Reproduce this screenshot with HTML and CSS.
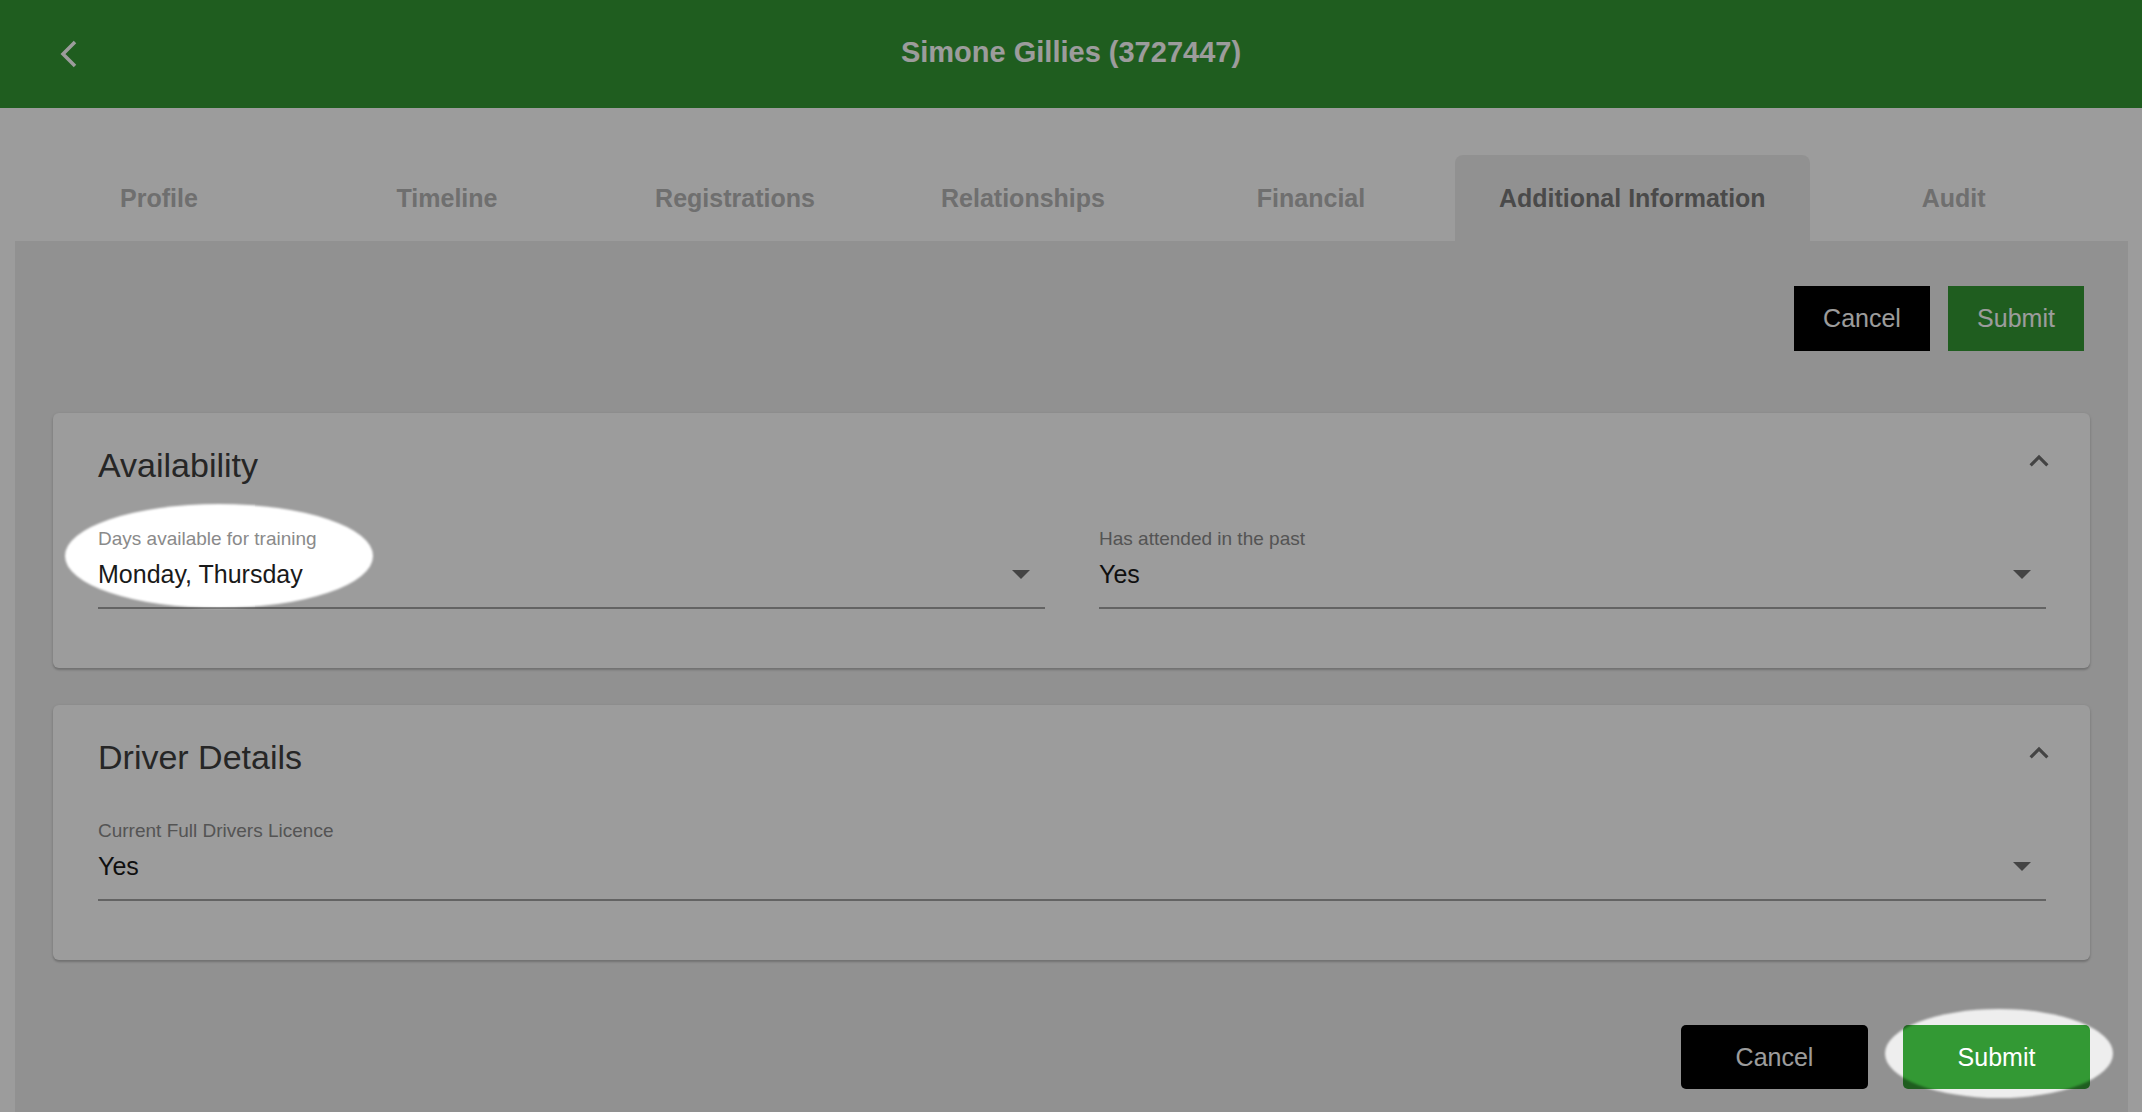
FILE: index.html
```html
<!DOCTYPE html>
<html>
<head>
  <link rel="stylesheet" href="styles.css">
</head>
<body>
  <header class="app-bar">
    <button class="back-button" aria-label="Back">
      <svg width="22" height="28" viewBox="0 0 22 28">
        <polyline points="17,2 5,14 17,26" fill="none" stroke="#fff" stroke-width="3.5"/>
      </svg>
    </button>
    <h1 class="app-title">Simone Gillies (3727447)</h1>
    <div></div>
  </header>

  <nav class="tabs">
    <div class="tab">Profile</div>
    <div class="tab">Timeline</div>
    <div class="tab">Registrations</div>
    <div class="tab">Relationships</div>
    <div class="tab">Financial</div>
    <div class="tab active">Additional Information</div>
    <div class="tab">Audit</div>
  </nav>

  <main class="panel">
    <div class="top-actions">
      <button class="btn btn-cancel">Cancel</button>
      <button class="btn btn-submit">Submit</button>
    </div>

    <section class="card">
      <div class="card-head">
        <h3 class="card-title">Availability</h3>
        <svg class="expand-icon" viewBox="0 0 24 24"><path d="M12 8l-6 6 1.41 1.41L12 10.83l4.59 4.58L18 14z"/></svg>
      </div>
      <div class="fields">
        <div class="field">
          <label class="field-label">Days available for training</label>
          <div class="field-input">
            <span class="field-value">Monday, Thursday</span>
            <svg class="drop-arrow" viewBox="0 0 18 9"><polygon points="0,0 18,0 9,9"/></svg>
          </div>
        </div>
        <div class="field">
          <label class="field-label">Has attended in the past</label>
          <div class="field-input">
            <span class="field-value">Yes</span>
            <svg class="drop-arrow" viewBox="0 0 18 9"><polygon points="0,0 18,0 9,9"/></svg>
          </div>
        </div>
      </div>
    </section>

    <section class="card">
      <div class="card-head">
        <h3 class="card-title">Driver Details</h3>
        <svg class="expand-icon" viewBox="0 0 24 24"><path d="M12 8l-6 6 1.41 1.41L12 10.83l4.59 4.58L18 14z"/></svg>
      </div>
      <div class="fields single">
        <div class="field">
          <label class="field-label">Current Full Drivers Licence</label>
          <div class="field-input">
            <span class="field-value">Yes</span>
            <svg class="drop-arrow" viewBox="0 0 18 9"><polygon points="0,0 18,0 9,9"/></svg>
          </div>
        </div>
      </div>
    </section>

    <div class="bottom-actions">
      <button class="btn btn-cancel rounded">Cancel</button>
      <button class="btn btn-submit rounded">Submit</button>
    </div>
  </main>

  <!-- tour spotlight: dim everything except the two highlighted spots -->
  <svg class="tour-mask" viewBox="0 0 2142 1112" preserveAspectRatio="none">
    <defs>
      <filter id="soft" x="-10%" y="-10%" width="120%" height="120%">
        <feGaussianBlur stdDeviation="1"/>
      </filter>
      <mask id="holes" maskUnits="userSpaceOnUse" x="0" y="0" width="2142" height="1112">
        <rect width="2142" height="1112" fill="#fff"/>
        <ellipse cx="219" cy="556" rx="154" ry="52" fill="#000" filter="url(#soft)"/>
        <ellipse cx="1999" cy="1053.5" rx="114" ry="44.5" fill="#000" filter="url(#soft)"/>
      </mask>
    </defs>
    <rect width="2142" height="1112" fill="#000" fill-opacity="0.39" mask="url(#holes)"/>
  </svg>
</body>
</html>
```

FILE: styles.css
```css
* {
  box-sizing: border-box;
  margin: 0;
  padding: 0;
}

html,
body {
  height: 100%;
  overflow: hidden;
}

body {
  background-color: #fff;
  font-family: "Liberation Sans", Arial, sans-serif;
  color: #1a1a1a;
}

.app-bar {
  height: 108px;
  background-color: #339934;
  display: grid;
  grid-template-columns: 1fr auto 1fr;
  align-items: center;
  padding-bottom: 3px;
}

.back-button {
  background: none;
  border: none;
  width: 22px;
  height: 28px;
  margin-left: 58px;
  margin-top: 3px;
  cursor: pointer;
}

.back-button svg {
  display: block;
}

.app-title {
  font-size: 29px;
  font-weight: 700;
  color: #fff;
}

.tabs {
  display: flex;
  padding: 47px 0 0 15px;
}

.tab {
  height: 86px;
  min-width: 288px;
  padding: 0 44px;
  display: flex;
  align-items: center;
  justify-content: center;
  font-size: 25px;
  font-weight: 700;
  color: #b5b5b5;
  border-radius: 8px 8px 0 0;
}

.tab.active {
  background-color: #eeeeee;
  color: #7a7a7a;
}

.panel {
  background-color: #eeeeee;
  margin: 0 14px 0 15px;
  padding: 45px 38px 23px 38px;
  min-height: calc(100vh - 241px);
}

.top-actions {
  display: flex;
  justify-content: flex-end;
  gap: 18px;
  padding-right: 6px;
  margin-bottom: 62px;
}

.btn {
  border: none;
  font-family: inherit;
  font-size: 25px;
  color: #fff;
  cursor: pointer;
  width: 136px;
  height: 65px;
}

.btn-cancel {
  background-color: #000;
}

.btn-submit {
  background-color: #339934;
}

.btn.rounded {
  width: 187px;
  height: 64px;
  border-radius: 5px;
}

.card {
  background-color: #fff;
  border-radius: 6px;
  box-shadow: 0 2px 2px rgba(0, 0, 0, 0.16), 0 1px 4px rgba(0, 0, 0, 0.12);
  padding: 32px 44px 59px 45px;
  margin-bottom: 37px;
}

.card-head {
  display: flex;
  justify-content: space-between;
  align-items: flex-start;
}

.card-title {
  font-size: 34px;
  font-weight: 400;
  line-height: 40px;
  color: #3e3e3e;
}

.expand-icon {
  width: 38px;
  height: 38px;
  margin-top: -3px;
  margin-right: -12px;
  fill: #707070;
}

.fields {
  display: grid;
  grid-template-columns: 1fr 1fr;
  gap: 54px;
  margin-top: 42px;
}

.fields.single {
  grid-template-columns: 1fr;
}

.field-label {
  display: block;
  font-size: 19px;
  line-height: 23px;
  color: #8a8a8a;
}

.field-input {
  display: flex;
  align-items: center;
  justify-content: space-between;
  height: 50px;
  margin-top: 9px;
  padding-bottom: 18px;
  border-bottom: 2px solid #a3a3a3;
}

.field-value {
  font-size: 25px;
  line-height: 30px;
  color: #1a1a1a;
}

.drop-arrow {
  width: 18px;
  height: 9px;
  margin-right: 15px;
  fill: #707070;
}

.bottom-actions {
  display: flex;
  justify-content: flex-end;
  gap: 35px;
  margin-top: 65px;
}

.tour-mask {
  position: fixed;
  top: 0;
  left: 0;
  width: 100%;
  height: 100%;
  pointer-events: none;
}
```
